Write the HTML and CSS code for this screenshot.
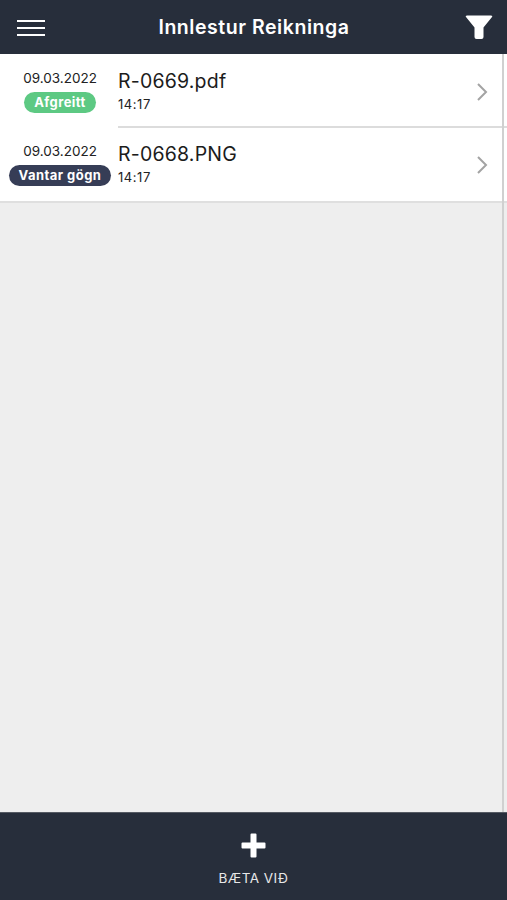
FILE: index.html
```html
<!DOCTYPE html>
<html lang="is">
<head>
<meta charset="utf-8">
<title>Innlestur Reikninga</title>
<link rel="stylesheet" href="styles.css">
</head>
<body>
<div class="app">
  <header class="topbar">
    <svg class="menu-icon" width="28" height="18" viewBox="0 0 28 18"><path d="M0 2h28M0 9h28M0 16h28" stroke="#fff" stroke-width="2.2" fill="none"/></svg>
    <h1 class="title">Innlestur Reikninga</h1>
    <svg class="filter-icon" width="28" height="24" viewBox="0 0 28 24"><path d="M1 2Q0 .5 2 .5H26Q28 .5 27 2L18.500 12.500V22Q18.500 24 16.500 24H11.500Q9.500 24 9.500 22V12.500Z" fill="#fff"/></svg>
  </header>
  <main class="content">
    <div class="list">
      <div class="row">
        <div class="meta">
          <div class="date">09.03.2022</div>
          <div class="badge badge-done">Afgreitt</div>
        </div>
        <div class="body">
          <div class="name">R-0669.pdf</div>
          <div class="time">14:17</div>
        </div>
        <svg class="chevron" width="12" height="20" viewBox="0 0 12 20"><path d="M2 2l8 8-8 8" stroke="#a3a3a3" stroke-width="2" fill="none"/></svg>
      </div>
      <div class="row">
        <div class="meta">
          <div class="date">09.03.2022</div>
          <div class="badge badge-missing">Vantar gögn</div>
        </div>
        <div class="body">
          <div class="name">R-0668.PNG</div>
          <div class="time">14:17</div>
        </div>
        <svg class="chevron" width="12" height="20" viewBox="0 0 12 20"><path d="M2 2l8 8-8 8" stroke="#a3a3a3" stroke-width="2" fill="none"/></svg>
      </div>
    </div>
    <div class="scrollbar"></div>
  </main>
  <footer class="bottombar">
    <svg class="plus-icon" width="25" height="25" viewBox="0 0 25 25"><path d="M9.5 1.5Q9.5 0.5 10.5 0.5H14.5Q15.500 0.5 15.5 1.5V9.500H23.500Q24.500 9.500 24.500 10.500V14.500Q24.500 15.500 23.500 15.500H15.500V23.500Q15.500 24.500 14.500 24.500H10.500Q9.500 24.500 9.500 23.500V15.500H1.500Q.5 15.500 .5 14.500V10.500Q.5 9.500 1.500 9.500H9.500Z" fill="#fff"/></svg>
    <div class="add-label">BÆTA VIÐ</div>
  </footer>
</div>
</body>
</html>
```
FILE: styles.css
```css
* { box-sizing: border-box; }
html, body { margin: 0; padding: 0; height: 100%; }
body { font-family: Inter, "Liberation Sans", sans-serif; background: #eeeeee; }
.app { display: flex; flex-direction: column; height: 900px; width: 507px; overflow: hidden; }
.topbar { height: 54px; flex: none; background: #272e3b; display: flex; align-items: center; justify-content: space-between; padding: 0 14px 0 17px; }
.menu-icon { display: block; margin-top: 2px; }
.filter-icon { display: block; }
.title { margin: 0 2px 0 0; font-size: 19.500px; font-weight: 600; color: #fff; letter-spacing: .55px; }
.content { flex: 1; position: relative; background: #eeeeee; }
.list { background: #fff; border-bottom: 2px solid #dfdfdf; padding-bottom: 1px; }
.row { height: 73px; display: flex; align-items: flex-start; position: relative; }
.row + .row::before { content: ""; position: absolute; left: 118px; right: 0; top: -1px; height: 2px; background: #dcdcdc; }
.meta { width: 118px; flex: none; display: flex; flex-direction: column; align-items: center; padding: 15px 0 0 2px; }
.date { font-size: 13.500px; line-height: 18px; color: #222; }
.badge { margin-top: 5px; height: 21px; line-height: 21px; border-radius: 11px; font-size: 13px; font-weight: 700; color: #fff; text-align: center; white-space: nowrap; letter-spacing: .45px; }
.badge-done { background: #5dc983; width: 72px; }
.badge-missing { background: #363d56; width: 102px; }
.body { flex: 1; padding-top: 15px; }
.name { font-size: 19.500px; line-height: 24px; color: #1c1c1c; letter-spacing: .2px; }
.time { font-size: 13px; line-height: 18px; margin-top: 2px; color: #222; letter-spacing: .55px; }
.chevron { position: absolute; right: 19px; top: 27px; }
.row .chevron { margin-top: 1px; }
.scrollbar { position: absolute; right: 3px; top: 0; bottom: 0; width: 2px; background: #d0d0d0; }
.bottombar { height: 88px; flex: none; background: #272e3b; border-top: 1px solid #555a63; display: flex; flex-direction: column; align-items: center; padding-top: 20px; }
.plus-icon { display: block; }
.add-label { margin-top: 11px; font-size: 13.500px; line-height: 18px; color: #e8e8e8; letter-spacing: .45px; }
```
